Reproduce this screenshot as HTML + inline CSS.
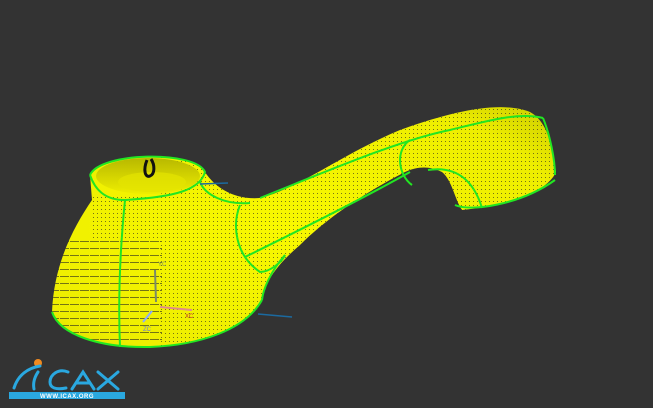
<!DOCTYPE html>
<html><head><meta charset="utf-8"><style>
html,body{margin:0;padding:0;background:#333333;width:653px;height:408px;overflow:hidden}
svg{display:block}
</style></head><body>
<svg width="653" height="408" viewBox="0 0 653 408" xmlns="http://www.w3.org/2000/svg">
<defs>
<radialGradient id="g1" cx="0.45" cy="0.5" r="0.75">
<stop offset="0" stop-color="#f8f800"/><stop offset="0.75" stop-color="#eeee00"/><stop offset="1" stop-color="#c8c800"/>
</radialGradient>
<linearGradient id="cup" x1="0" y1="0" x2="0" y2="1">
<stop offset="0" stop-color="#b8b800"/><stop offset="1" stop-color="#eeee00"/>
</linearGradient>
<pattern id="dots" width="4" height="4" patternUnits="userSpaceOnUse">
<rect x="1" y="1" width="1" height="1" fill="#222"/>
</pattern>
<pattern id="lines" width="10" height="7" patternUnits="userSpaceOnUse">
<rect x="0" y="3" width="9" height="1" fill="#222"/>
</pattern>
<clipPath id="cp"><path d="M52,312 C54,262 75,225 92,200 L90,175 C100,152 195,150 205,172 C215,188 235,200 260,198 C300,188 340,155 400,130 C450,112 500,100 530,112 C545,120 552,140 556,172 C548,190 515,205 462,210 C455,200 452,180 442,172 C430,166 418,166 405,172 C370,190 330,215 300,245 C280,262 265,280 262,300 C245,330 200,345 150,347 C100,348 60,335 52,312 Z"/></clipPath>
</defs>
<path d="M52,312 C54,262 75,225 92,200 L90,175 C100,152 195,150 205,172 C215,188 235,200 260,198 C300,188 340,155 400,130 C450,112 500,100 530,112 C545,120 552,140 556,172 C548,190 515,205 462,210 C455,200 452,180 442,172 C430,166 418,166 405,172 C370,190 330,215 300,245 C280,262 265,280 262,300 C245,330 200,345 150,347 C100,348 60,335 52,312 Z" fill="url(#g1)"/>
<g clip-path="url(#cp)" opacity="0.6">
<rect x="160" y="100" width="420" height="250" fill="url(#dots)"/>
<rect x="52" y="235" width="110" height="115" fill="url(#lines)"/>
<rect x="90" y="195" width="70" height="45" fill="url(#dots)"/>
</g>
<ellipse cx="148" cy="176" rx="52" ry="18" fill="url(#cup)"/>
<ellipse cx="152" cy="182" rx="34" ry="10" fill="#e4e400" opacity="0.7"/>
<path d="M147,160 C143,170 145,178 150,176 C155,174 155,165 151,159" fill="none" stroke="#111" stroke-width="3"/>
<g fill="none" stroke="#22e622" stroke-width="2">
<path d="M52,312 C60,335 100,348 150,347 C200,345 245,330 262,300"/>
<path d="M90,175 C100,152 195,150 205,172 C200,190 175,197 125,200 C105,200 95,190 90,175"/>
<path d="M125,200 C120,250 118,300 120,347"/>
<path d="M200,182 C205,195 225,205 250,203"/>
<path d="M240,205 C232,225 235,255 260,272 C270,272 282,262 285,255"/>
<path d="M245,257 C300,230 360,200 410,172"/>
<path d="M260,198 C330,170 400,140 450,130 C490,120 520,112 543,118"/>
<path d="M410,140 C395,150 398,175 412,185"/>
<path d="M428,170 C460,165 475,185 482,208"/>
<path d="M455,205 C470,212 520,205 555,180"/>
<path d="M543,118 C550,135 555,160 555,175"/>
<path d="M285,255 C270,272 263,290 262,300"/>
</g>
<line x1="200" y1="184" x2="228" y2="183" stroke="#1b6aa0" stroke-width="1.5"/>
<line x1="258" y1="314" x2="292" y2="317" stroke="#1b6aa0" stroke-width="1.5"/>
<line x1="155" y1="270" x2="156" y2="302" stroke="#7a8a6a" stroke-width="2"/>
<line x1="160" y1="307" x2="192" y2="310" stroke="#e08a8a" stroke-width="2"/>
<line x1="152" y1="311" x2="143" y2="322" stroke="#8aaaff" stroke-width="2"/>
<text x="158" y="266" font-family="Liberation Sans,sans-serif" font-size="6" fill="#7a8a6a">YC</text>
<text x="185" y="318" font-family="Liberation Sans,sans-serif" font-size="6" fill="#c03030">XC</text>
<text x="143" y="331" font-family="Liberation Sans,sans-serif" font-size="6" fill="#6a7ae0">ZC</text>
<circle cx="38" cy="363" r="4" fill="#f08a20"/>
<g fill="none" stroke="#2aa8e0" stroke-width="3" stroke-linecap="round">
<path d="M14,388 C18,375 28,368 40,366"/>
<path d="M38,372 C34,378 33,384 34,389"/>
<path d="M68,372 C58,368 50,375 50,382 C50,388 56,390 66,388"/>
<path d="M72,389 L83,372 L94,389 M77,383 L89,383"/>
<path d="M98,372 L118,389 M118,372 L98,389"/>
</g>
<rect x="9" y="392" width="116" height="7" fill="#2aa8e0"/>
<text x="67" y="398" text-anchor="middle" font-family="Liberation Sans,sans-serif" font-weight="bold" font-size="6" fill="#fff" letter-spacing="0.5">WWW.ICAX.ORG</text>
</svg>
</body></html>
